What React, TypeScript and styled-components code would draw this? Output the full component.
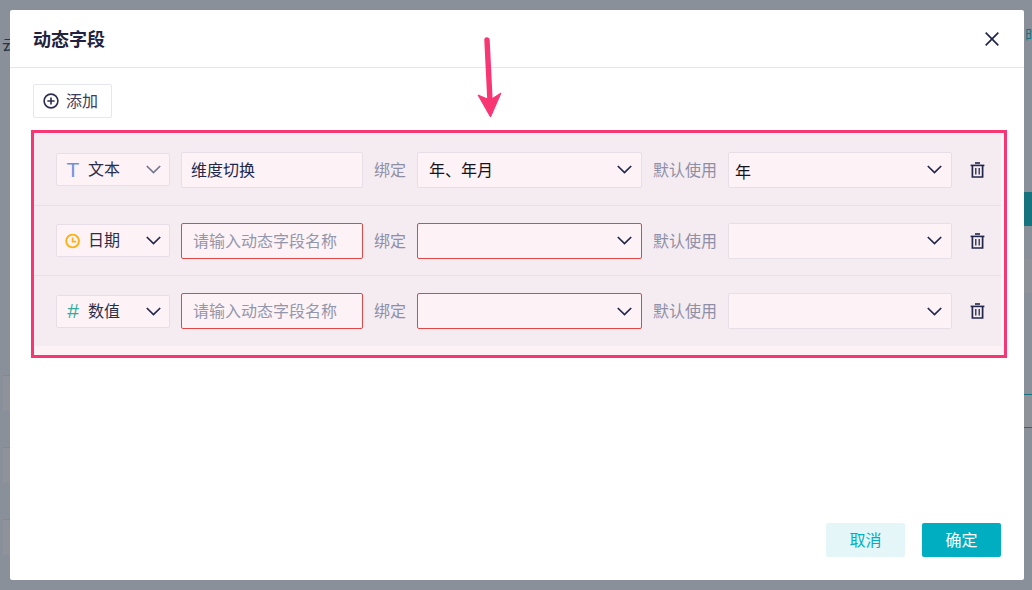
import { ReactNode } from 'react';
import { createGlobalStyle, styled } from 'styled-components';

const GlobalStyle = createGlobalStyle`
  html, body {
    margin: 0;
    padding: 0;
    height: 590px;
    overflow: hidden;
    font-family: "Noto Sans CJK SC", "Liberation Sans", sans-serif;
  }
`;

interface FieldRow {
  type: string;
  icon: ReactNode;
  typeMuted?: boolean;
  name: string;
  binding: string;
  defaultValue: string;
  invalid?: boolean;
}

const Chevron = ({ muted }: { muted?: boolean }) => (
  <svg width="15" height="9" viewBox="0 0 15 9" fill="none">
    <path d="M0.8 1L7.5 7.6L14.2 1" stroke={muted ? '#74768c' : '#22264a'} strokeWidth="1.7" />
  </svg>
);

const ClockIcon = () => (
  <svg width="16" height="16" viewBox="0 0 16 16" fill="none">
    <circle cx="7.6" cy="8" r="6.4" stroke="#fbb216" strokeWidth="1.9" />
    <path d="M7.6 4.6V8.6H11.2" stroke="#fbb216" strokeWidth="1.7" />
  </svg>
);

const TrashIcon = () => (
  <svg width="15" height="16" viewBox="0 0 15 16" fill="none">
    <path d="M0.6 3.4H14.4" stroke="#22264a" strokeWidth="1.6" />
    <path d="M5 1H10" stroke="#22264a" strokeWidth="1.6" />
    <path d="M2.4 3.4V15H12.6V3.4" stroke="#22264a" strokeWidth="1.7" />
    <path d="M5.8 6V12.4M9.2 6V12.4" stroke="#22264a" strokeWidth="1.3" />
  </svg>
);

function LetterIcon({ $color, children }: { $color: string; children: ReactNode }) {
  return <Letter $color={$color}>{children}</Letter>;
}

const rows: FieldRow[] = [
  {
    type: '文本',
    icon: <LetterIcon $color="#6e90dc">T</LetterIcon>,
    typeMuted: true,
    name: '维度切换',
    binding: '年、年月',
    defaultValue: '年',
  },
  {
    type: '日期',
    icon: <ClockIcon />,
    name: '',
    binding: '',
    defaultValue: '',
    invalid: true,
  },
  {
    type: '数值',
    icon: <LetterIcon $color="#35ab9c">#</LetterIcon>,
    name: '',
    binding: '',
    defaultValue: '',
    invalid: true,
  },
];

const App = () => {
  return (
    <Backdrop>
      <GlobalStyle />
      <PageTextLeft>云</PageTextLeft>
      <PageTextRight>时</PageTextRight>
      <RightTeal />
      <RightLight $top={259} />
      <RightLight $top={394} />
      <RightLine $top={394} />
      <RightLine $top={427} />
      <LeftCell $top={375} />
      <LeftCell $top={447} />
      <LeftCell $top={519} />
      <Modal>
        <Header>
          <Title>动态字段</Title>
          <CloseButton aria-label="关闭">
            <svg width="14" height="14" viewBox="0 0 14 14" fill="none">
              <path d="M0.7 0.7L13.3 13.3M13.3 0.7L0.7 13.3" stroke="#22264a" strokeWidth="1.7" />
            </svg>
          </CloseButton>
        </Header>
        <Body>
          <AddButton>
            <svg width="16" height="16" viewBox="0 0 16 16" fill="none">
              <circle cx="8" cy="8" r="6.9" stroke="#2b2e4f" strokeWidth="1.6" />
              <path d="M8 4.4V11.6M4.4 8H11.6" stroke="#2b2e4f" strokeWidth="1.6" />
            </svg>
            <AddLabel>添加</AddLabel>
          </AddButton>
          <Highlight>
            {rows.map((row, index) => (
              <Row key={index}>
                <TypeSelect>
                  <TypeIcon>{row.icon}</TypeIcon>
                  <TypeName>{row.type}</TypeName>
                  <Chevron muted={row.typeMuted} />
                </TypeSelect>
                <NameInput
                  $invalid={row.invalid}
                  defaultValue={row.name}
                  placeholder="请输入动态字段名称"
                />
                <FieldLabel>绑定</FieldLabel>
                <BindSelect $invalid={row.invalid}>
                  <span>{row.binding}</span>
                  <Chevron />
                </BindSelect>
                <FieldLabel>默认使用</FieldLabel>
                <DefaultSelect>
                  <span>{row.defaultValue}</span>
                  <Chevron />
                </DefaultSelect>
                <DeleteButton aria-label="删除">
                  <TrashIcon />
                </DeleteButton>
              </Row>
            ))}
          </Highlight>
        </Body>
        <Footer>
          <CancelButton>取消</CancelButton>
          <ConfirmButton>确定</ConfirmButton>
        </Footer>
        <Arrow width="30" height="84" viewBox="0 0 30 84" fill="none">
          <path d="M12 3L15 64" stroke="#f73673" strokeWidth="5.4" strokeLinecap="round" />
          <path d="M3 58L15.5 80L26 56L15 63Z" fill="#f73673" stroke="#f73673" strokeWidth="1" />
        </Arrow>
      </Modal>
    </Backdrop>
  );
};

const Backdrop = styled.div`
  position: relative;
  box-sizing: border-box;
  width: 1032px;
  height: 590px;
  padding: 10px 8px 10px 10px;
  background-color: #8a9099;
  overflow: hidden;
`;

const PageTextLeft = styled.span`
  position: absolute;
  left: 2px;
  top: 33px;
  font-size: 15px;
  color: #2c3440;
`;

const PageTextRight = styled.span`
  position: absolute;
  left: 1025px;
  top: 23px;
  font-size: 15px;
  color: #14737f;
`;

const RightTeal = styled.div`
  position: absolute;
  left: 1024px;
  top: 192px;
  width: 8px;
  height: 34px;
  background-color: #14737f;
`;

const RightLight = styled.div<{ $top: number }>`
  position: absolute;
  left: 1024px;
  top: ${(p) => p.$top}px;
  width: 8px;
  height: 34px;
  background-color: #8f9299;
`;

const RightLine = styled.div<{ $top: number }>`
  position: absolute;
  left: 1024px;
  top: ${(p) => p.$top}px;
  width: 8px;
  height: 1px;
  background-color: #14737f;
`;

const LeftCell = styled.div<{ $top: number }>`
  position: absolute;
  left: 3px;
  top: ${(p) => p.$top}px;
  width: 7px;
  height: 35px;
  background-color: #8f9299;
  border-top: 1px solid #838993;
`;

const Modal = styled.div`
  position: relative;
  display: flex;
  flex-direction: column;
  width: 1014px;
  height: 570px;
  background-color: #ffffff;
  border-radius: 2px;
`;

const Header = styled.div`
  display: flex;
  align-items: center;
  justify-content: space-between;
  box-sizing: border-box;
  height: 58px;
  padding: 0 25px 0 23px;
  border-bottom: 1px solid #e6e6ee;
`;

const Title = styled.h2`
  margin: 0 0 2px;
  font-size: 18px;
  font-weight: 700;
  line-height: 56px;
  color: #1f2340;
`;

const CloseButton = styled.button`
  display: flex;
  padding: 0;
  border: 0;
  background: none;
`;

const Body = styled.div`
  display: flex;
  flex-direction: column;
  align-items: flex-start;
  padding: 16px 17px 0 21px;
`;

const AddButton = styled.button`
  display: flex;
  align-items: center;
  gap: 7px;
  box-sizing: border-box;
  width: 79px;
  height: 34px;
  margin-left: 2px;
  padding: 0 0 0 9px;
  background-color: #ffffff;
  border: 1px solid #e6e6ee;
  border-radius: 2px;
  font-family: inherit;
  font-size: 16px;
  color: #3c3f5c;
`;

const AddLabel = styled.span`
  margin-bottom: 2px;
`;

const Highlight = styled.div`
  box-sizing: border-box;
  width: 976px;
  height: 228px;
  margin-top: 12px;
  padding: 1px 3px 9px 0;
  background-color: #fdf3f7;
  border: 3px solid #f73673;
`;

const Row = styled.div`
  display: flex;
  align-items: center;
  box-sizing: border-box;
  height: 70px;
  padding-left: 22px;
  background-color: #f5ecf2;
  border-bottom: 1px solid #e8e1e9;

  &:first-child {
    height: 72px;
  }

  &:last-child {
    border-bottom: 0;
  }
`;

const controlBox = `
  display: flex;
  align-items: center;
  box-sizing: border-box;
  background-color: #fdf3f7;
  border-radius: 2px;
  font-family: inherit;
  font-size: 16px;
`;

const TypeSelect = styled.div`
  ${controlBox}
  width: 114px;
  height: 33px;
  padding: 0 8px 0 8px;
  border: 1px solid #e6dfe8;
  color: #2b2e4a;
`;

const TypeIcon = styled.span`
  display: flex;
  justify-content: center;
  width: 16px;
`;

const Letter = styled.span<{ $color: string }>`
  font-family: "Liberation Sans", sans-serif;
  font-size: 21px;
  line-height: 20px;
  color: ${(p) => p.$color};
`;

const TypeName = styled.span`
  flex: 1;
  margin: 0 0 3px 7px;
  line-height: 20px;
`;

const NameInput = styled.input<{ $invalid?: boolean }>`
  ${controlBox}
  width: 182px;
  height: 36px;
  margin-left: 11px;
  padding: 0 0 2px ${(p) => (p.$invalid ? 11 : 9)}px;
  border: 1px solid ${(p) => (p.$invalid ? '#e04848' : '#e6dfe8')};
  color: #23264a;
  outline: none;

  &::placeholder {
    color: #9496ab;
    opacity: 1;
  }
`;

const FieldLabel = styled.span`
  margin: 0 11px 2px 11px;
  font-size: 16px;
  color: #8e8fa5;
  white-space: nowrap;
`;

const BindSelect = styled.div<{ $invalid?: boolean }>`
  ${controlBox}
  justify-content: space-between;
  width: 225px;
  height: 36px;
  padding: 0 9px 0 11px;
  border: 1px solid ${(p) => (p.$invalid ? '#e04848' : '#e6dfe8')};
  color: #14141c;

  & > span {
    margin-bottom: 2px;
  }
`;

const DefaultSelect = styled.div`
  ${controlBox}
  justify-content: space-between;
  width: 224px;
  height: 36px;
  padding: 0 9px 0 6px;
  border: 1px solid #e6dfe8;
  color: #14141c;

  & > span {
    position: relative;
    top: 1px;
  }
`;

const DeleteButton = styled.button`
  display: flex;
  margin-left: 18px;
  padding: 0;
  border: 0;
  background: none;
`;

const Footer = styled.div`
  display: flex;
  justify-content: flex-end;
  gap: 17px;
  margin-top: auto;
  padding: 0 23px 23px 0;
`;

const CancelButton = styled.button`
  width: 79px;
  height: 34px;
  padding: 0 0 2px;
  background-color: #e5f6f9;
  border: 0;
  border-radius: 2px;
  font-family: inherit;
  font-size: 16px;
  color: #00aec2;
`;

const ConfirmButton = styled(CancelButton)`
  background-color: #00aec2;
  color: #ffffff;
`;

const Arrow = styled.svg`
  position: absolute;
  left: 465px;
  top: 27px;
`;

export default App;
